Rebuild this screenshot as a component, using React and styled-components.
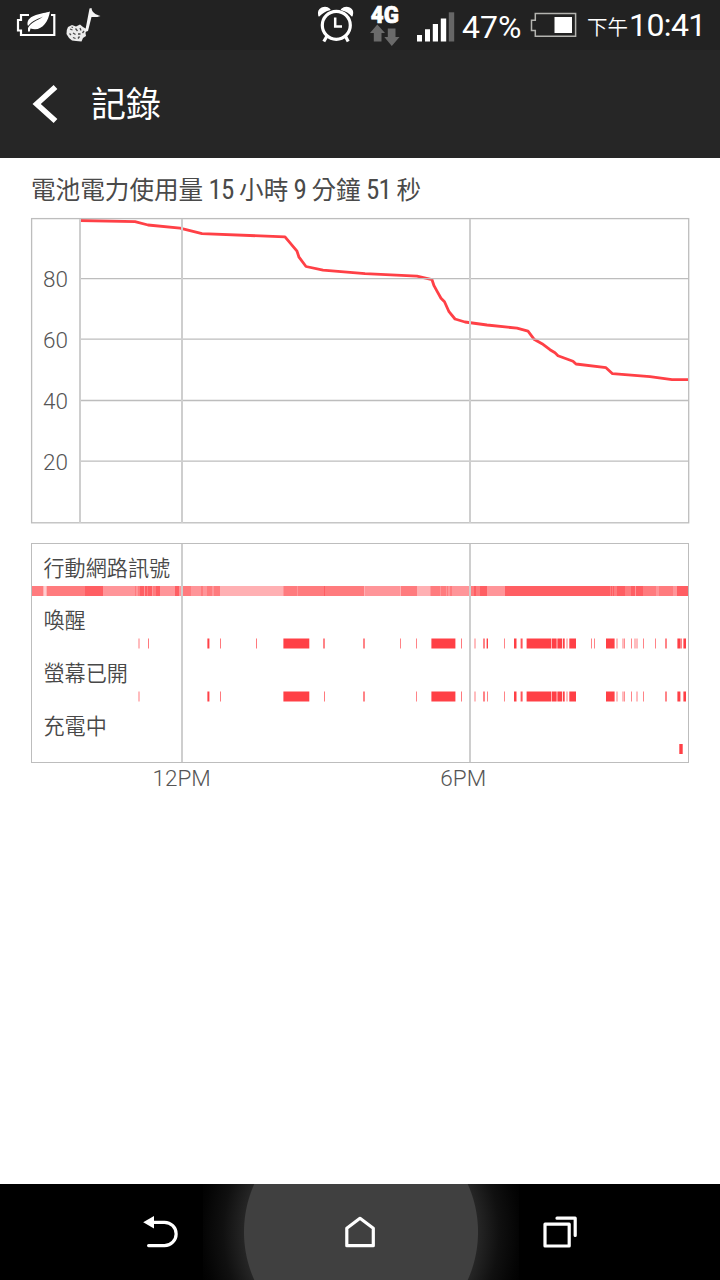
import React from "react";
import styled, { createGlobalStyle } from "styled-components";

const LEVELS = ["#ffcdcf", "#ffb0b3", "#ff9599", "#ff7b7e", "#ff5e63"];

// [start, end, level]
const signal = [
  [0, 11, 3],
  [11, 12, 1],
  [12, 14, 0],
  [14, 15, 1],
  [15, 53, 3],
  [53, 71, 4],
  [71, 103, 2],
  [103, 104, 3],
  [104, 106, 2],
  [106, 108, 3],
  [108, 112, 4],
  [112, 113, 2],
  [113, 115, 4],
  [115, 116, 3],
  [116, 120, 4],
  [120, 121, 2],
  [121, 124, 3],
  [124, 128, 4],
  [128, 143, 2],
  [143, 147, 4],
  [147, 149, 2],
  [149, 159, 3],
  [159, 169, 2],
  [169, 171, 3],
  [171, 175, 2],
  [175, 180, 3],
  [180, 182, 2],
  [182, 188, 3],
  [188, 251, 1],
  [251, 252, 2],
  [252, 265, 3],
  [265, 266, 2],
  [266, 292, 3],
  [292, 293, 4],
  [293, 332, 3],
  [332, 333, 1],
  [333, 368, 2],
  [368, 369, 1],
  [369, 385, 3],
  [385, 398, 1],
  [398, 399, 2],
  [399, 408, 3],
  [408, 409, 2],
  [409, 414, 3],
  [414, 415, 2],
  [415, 416, 3],
  [416, 418, 2],
  [418, 420, 3],
  [420, 437, 2],
  [437, 442, 3],
  [442, 444, 4],
  [444, 448, 3],
  [448, 455, 4],
  [455, 473, 2],
  [473, 578, 4],
  [578, 579, 3],
  [579, 580, 4],
  [580, 581, 3],
  [581, 582, 4],
  [582, 585, 3],
  [585, 593, 4],
  [593, 599, 3],
  [599, 603, 4],
  [603, 604, 2],
  [604, 611, 4],
  [611, 624, 3],
  [624, 627, 2],
  [627, 641, 3],
  [641, 645, 2],
  [645, 656, 4]
];

// [start, width, opacity]
const awake = [
  [106, 2, 0.35],
  [116, 1, 0.7],
  [175.4, 2, 1],
  [188, 1, 0.7],
  [224, 1, 0.7],
  [251.4, 25.9, 1],
  [291, 2, 0.65],
  [331, 2, 0.65],
  [368, 1, 0.65],
  [384, 1, 0.65],
  [399.4, 24, 1],
  [429, 1, 0.7],
  [442, 2, 0.35],
  [451, 2, 0.65],
  [454, 1, 0.4],
  [455, 1, 1],
  [472, 1, 0.65],
  [482, 2.5, 1],
  [488.6, 2, 0.9],
  [494.6, 24.4, 1],
  [519.6, 4.4, 1],
  [524, 2, 0.65],
  [526, 4.2, 1],
  [531, 1.7, 1],
  [534, 2, 0.35],
  [537.3, 6.7, 1],
  [559, 1, 0.65],
  [562, 1, 0.65],
  [574, 8.6, 1],
  [584, 2, 0.35],
  [590, 2, 0.35],
  [592, 1, 0.6],
  [599, 1, 0.65],
  [602, 4, 0.35],
  [611, 1, 0.65],
  [623, 1, 0.65],
  [633, 2, 0.65],
  [645.4, 2.6, 1],
  [648, 2, 0.65],
  [651.4, 2.6, 1]
];

const screenOff = [116, 224, 368, 454, 559, 562, 623, 648];
const screenOn = awake
  .filter(([x]) => !screenOff.includes(x))
  .map(([x, w, o]) => {
    if (x === 291) return [292, 1, 0.7];
    if (x === 455) return [455, 1, 0.65];
    if (x === 602) return [604, 2, 0.35];
    if (x === 645.4) return [645.4, 3, 1];
    return [x, w, o];
  });

const charging = [[647.3, 3.4, 1]];

const level =
  "49,2.5 104,3.6 117,7 149,10.2 171,15.6 254,18.9 266,33.2 268,39.2 275,48.5 292,52.2 334,55.7 386,58.2 401,61.7 403,67.7 406,73.2 410,80.2 413.5,83.7 418,93.7 424,101 434,104 456,107 486,110.2 497,113.2 503,121.2 511,125.7 519,131.7 524,134.7 527,137.7 542,143.2 545,146 575,149.7 581.5,155.7 619,158.7 641,161.7 657,161.7";

const Strip = ({ marks, offset = 0 }) => (
  <StripSvg>
    {marks.map(([x, w, o]) => (
      <rect key={x} x={x} y={offset} width={w} height="10" fill="#ff4046" opacity={o} />
    ))}
  </StripSvg>
);

const App = () => (
  <Screen>
    <GlobalStyle />
    <StatusBar>
      <svg width="88" height="50" viewBox="16 0 88 50">
        <path
          d="M29 15H21V20H18V30.5H21V35H54.3V15H51"
          fill="none"
          stroke="#fff"
          strokeWidth="2.2"
        />
        <path
          d="M50 11.5C43 14 27 14 27.5 24.5L28 26C33 20 38 19 43 16.5C38 20.5 31 22 28 28V31.5H29.8L30.5 28.5C41 32 48 23 50 11.5Z"
          fill="#fff"
        />
        <path
          d="M68 27L72 25L76 26.5L80 24.5L83 27L86.5 29L85.5 33L86 36L83 38L81.5 41.5L76 41L72 40.5L69 38L66.5 34L66.8 30Z"
          fill="#ececec"
        />
        <path
          d="M70 29L72.5 30M75.5 28.5L77.5 31M80 28L81 30.5M69.5 33.5L71 35M73 33L75.5 34.5M78 34H80.5M82.5 33L84 31M73 37.5L75.5 38.5M78 38.5L79.5 36.5M71.5 27L73 27.5"
          stroke="#4a4a4a"
          strokeWidth="1.3"
        />
        <path d="M85 32L89.5 8.5L91.5 8C92 13 96 14.5 100.5 16C97 17.5 93.5 17 91.5 17L88 31Z" fill="#f5f5f5" />
      </svg>
      <Spacer />
      <svg width="140" height="50" viewBox="316 0 140 50">
        <g fill="none" stroke="#fff">
          <circle cx="336.3" cy="25.3" r="14" strokeWidth="3.2" />
          <path d="M335.2 17.5V26.5H342" strokeWidth="2.5" />
          <path d="M327 36L323.8 41.5M345.3 36L348.2 41.5" strokeWidth="3.2" />
        </g>
        <path
          d="M319 15.8C317 8.5 325 5 329.8 9.5C325 10.5 322 12.5 319 15.8ZM352 15.8C354.5 8.5 346.5 5 341.5 9.5C346 10.5 349.5 12.5 352 15.8Z"
          fill="#fff"
          stroke="#fff"
          strokeWidth="1.4"
          strokeLinejoin="round"
        />
        <NetworkText x="370.8" y="22.6" textLength="28" lengthAdjust="spacingAndGlyphs">
          4G
        </NetworkText>
        <path
          d="M377.3 24.5L385 33H381.5V41.5H373.8V33H370ZM391.8 46L399.5 37H395.5V28.5H387.8V37H384.3Z"
          fill="#6a6a6a"
        />
        <path
          d="M417 35H422V41.5H417ZM425 29.3H430V41.5H425ZM432.8 24H438V41.5H432.8ZM440.8 18.5H446.2V41.5H440.8Z"
          fill="#fff"
        />
        <path d="M448.8 12.3H454.2V41.5H448.8Z" fill="#666" />
      </svg>
      <Percent>47%</Percent>
      <svg width="47" height="50" viewBox="530 0 47 50">
        <path
          d="M535.3 13.5H575.6V36.3H535.3V30.4H531.5V20.3H535.3Z"
          fill="none"
          stroke="#b4b4b0"
          strokeWidth="1.5"
        />
        <path d="M554.5 17H572V33H554.5Z" fill="#fff" />
      </svg>
      <Meridiem>下午</Meridiem>
      <Clock>10:41</Clock>
    </StatusBar>
    <ActionBar>
      <svg width="26" height="40" viewBox="32 84 26 40">
        <path d="M55.5 87L36.7 104L55.5 121" fill="none" stroke="#fff" strokeWidth="5.6" />
      </svg>
      <Title>記錄</Title>
    </ActionBar>
    <Content>
      <Heading>
        電池電力使用量 <Num>15</Num> 小時 <Num>9</Num> 分鐘 <Num>51</Num> 秒
      </Heading>
      <ChartSvg width="660" height="306">
        <polyline points={level} fill="none" stroke="#ff4046" strokeWidth="2.8" strokeLinejoin="round" />
        <g stroke="#bdbdbd" strokeWidth="1.3" fill="none">
          <rect x="0.6" y="0.6" width="657.1" height="304.2" />
          <path d="M49 60.7H658M49 121.2H658M49 182.5H658M49 243.2H658" />
        </g>
        <path d="M49 1V305M151 1V305M439 1V305" stroke="#cecece" strokeWidth="2" />
        <AxisText x="12" y="69">80</AxisText>
        <AxisText x="12" y="129.7">60</AxisText>
        <AxisText x="12" y="191">40</AxisText>
        <AxisText x="12" y="251.7">20</AxisText>
      </ChartSvg>
      <Panel>
        <Row $height={52}>
          <RowLabel>行動網路訊號</RowLabel>
          <StripSvg shapeRendering="crispEdges">
            {signal.map(([from, to, lvl]) => (
              <rect key={from} x={from} y="0" width={to - from} height="10" fill={LEVELS[lvl]} />
            ))}
          </StripSvg>
        </Row>
        <Row $height={53}>
          <RowLabel>喚醒</RowLabel>
          <Strip marks={awake} offset={-0.5} />
        </Row>
        <Row $height={53}>
          <RowLabel>螢幕已開</RowLabel>
          <Strip marks={screenOn} offset={-0.5} />
        </Row>
        <Row $height={52}>
          <RowLabel>充電中</RowLabel>
          <Strip marks={charging} />
        </Row>
        <GridLine $left={149} />
        <GridLine $left={437} />
      </Panel>
      <Hours>
        <Hour>12PM</Hour>
        <Hour>6PM</Hour>
      </Hours>
    </Content>
    <NavBar>
      <svg width="36" height="34" viewBox="142 1215 36 34">
        <path
          d="M152 1222.3H164.5A11.6 11.6 0 0 1 164.5 1245.6H148.6"
          fill="none"
          stroke="#fff"
          strokeWidth="3.2"
          strokeLinecap="round"
        />
        <path d="M143.2 1222.3L154 1216V1228.6Z" fill="#fff" />
      </svg>
      <svg width="32" height="34" viewBox="344 1215 32 34">
        <path
          d="M346.8 1228.2L360 1218.3L373.3 1228.2V1245.7H346.8Z"
          fill="none"
          stroke="#fff"
          strokeWidth="3.2"
          strokeLinejoin="round"
        />
      </svg>
      <svg width="36" height="34" viewBox="542 1215 36 34">
        <g fill="none" stroke="#fff" strokeWidth="3.2" strokeLinejoin="round" strokeLinecap="round">
          <rect x="545" y="1224.2" width="24.2" height="21.8" />
          <path d="M557 1218.2H575.2V1235.5" />
        </g>
      </svg>
    </NavBar>
  </Screen>
);

export default App;

const GlobalStyle = createGlobalStyle`
  body {
    margin: 0;
    background: #fff;
  }

  svg {
    display: block;
    flex: none;
  }
`;

const Screen = styled.div`
  display: flex;
  flex-direction: column;
  width: 720px;
  height: 1280px;
  overflow: hidden;
  background: #fff;
  font-family: Roboto, "Noto Sans CJK TC", sans-serif;
`;

const StatusBar = styled.header`
  display: flex;
  align-items: center;
  height: 50px;
  box-sizing: border-box;
  padding: 0 14px 0 16px;
  background: #222;
  color: #fff;
  white-space: nowrap;
`;

const Spacer = styled.div`
  flex: 1;
`;

const NetworkText = styled.text`
  font-family: Roboto, sans-serif;
  font-size: 24.5px;
  font-weight: 900;
  fill: #fff;
  stroke: #fff;
  stroke-width: 0.7px;
`;

const Percent = styled.span`
  width: 68px;
  margin-left: 6px;
  font-size: 32px;
  line-height: 50px;
  padding-top: 3px;
`;

const Meridiem = styled.span`
  width: 42px;
  margin-left: 10px;
  font-size: 20.5px;
  font-weight: 350;
  line-height: 50px;
  padding-top: 5px;
`;

const Clock = styled.span`
  width: 77px;
  font-size: 32px;
  letter-spacing: -0.6px;
  line-height: 50px;
`;

const ActionBar = styled.div`
  display: flex;
  align-items: center;
  height: 108px;
  box-sizing: border-box;
  padding-left: 32px;
  background: #262626;
`;

const Title = styled.h1`
  margin: 0 0 0 33px;
  padding-top: 4px;
  color: #fff;
  font-size: 35px;
  font-weight: 400;
  line-height: 50px;
`;

const Content = styled.main`
  flex: 1;
  padding: 15px 31px 0;
`;

const Heading = styled.h2`
  height: 45px;
  margin: 0;
  color: #4a4a4a;
  font-size: 24.6px;
  font-weight: 400;
  line-height: 34px;
  white-space: pre;
  word-spacing: -0.8px;
`;

const Num = styled.span`
  font-size: 27px;
  font-stretch: 75%;
  letter-spacing: -0.7px;
`;

const ChartSvg = styled.svg`
  width: 660px;
  margin-right: -2px;
  overflow: visible;
`;

const AxisText = styled.text`
  font-size: 22.5px;
  font-weight: 300;
  fill: #555;
`;

const Panel = styled.section`
  position: relative;
  width: 656px;
  height: 218px;
  margin-top: 19px;
  border: 1px solid #bdbdbd;
`;

const Row = styled.div`
  display: flex;
  flex-direction: column;
  justify-content: space-between;
  height: ${(props) => props.$height}px;
`;

const RowLabel = styled.div`
  height: 42px;
  padding: 10px 0 0 11.5px;
  box-sizing: border-box;
  color: #484848;
  font-size: 21.1px;
  font-weight: 350;
  line-height: 30px;
`;

const StripSvg = styled.svg`
  width: 656px;
  height: 10px;
  overflow: visible;
`;

const GridLine = styled.div`
  position: absolute;
  top: 0;
  bottom: 0;
  left: ${(props) => props.$left}px;
  width: 2px;
  background: #cecece;
`;

const Hours = styled.div`
  display: flex;
  gap: 229.5px;
  padding-left: 121.5px;
`;

const Hour = styled.span`
  color: #555;
  font-size: 22.5px;
  font-weight: 300;
  line-height: 31px;
`;

const NavBar = styled.nav`
  display: flex;
  align-items: center;
  gap: 166px;
  height: 96px;
  box-sizing: border-box;
  padding-left: 142px;
  background:
    linear-gradient(90deg, #000 203px, transparent 203px, transparent 519px, #000 519px),
    radial-gradient(
      circle at 361px 48px,
      #404040 116.5px,
      #252525 117.5px,
      #101010 138px,
      #040404 158px,
      #000 168px
    );
`;
